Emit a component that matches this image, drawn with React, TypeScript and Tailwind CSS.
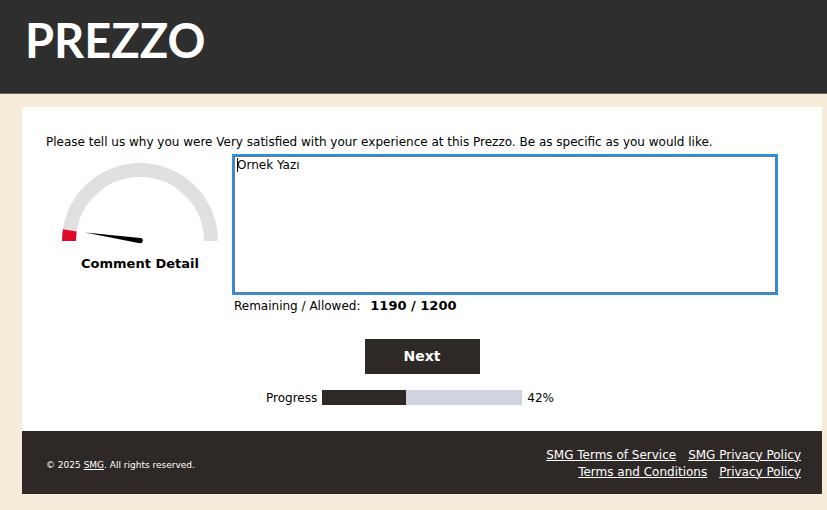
import React, { useState } from "react";

const LIMIT = 1200;
const PROGRESS = 42;

function Logo() {
  return (
    <svg viewBox="0 0 200 64" className="block h-[64px] w-[200px] overflow-visible" role="img" aria-label="Prezzo">
      <text x="1" y="54" fill="#fff" className="font-['Lato'] text-[47px] font-bold">
        PREZZO
      </text>
    </svg>
  );
}

function Gauge() {
  return (
    <svg viewBox="0 0 156 82" className="block h-[82px] w-[156px]" aria-hidden="true">
      <path d="M7 78a71 71 0 0 1 142 0" fill="none" stroke="#e0e0e0" strokeWidth="14" />
      <path d="M7 78a71 71 0 0 1 0.8-10.6" fill="none" stroke="#dd0a29" strokeWidth="14" />
      <path d="M23 69.4 78.6 75a2.6 2.6 0 1 1-.9 5.2Z" fill="#000" />
    </svg>
  );
}

export default function App() {
  const [comment, setComment] = useState("Ornek Yazı");
  return (
    <div className="min-h-screen bg-[#f7ebd9] font-['DejaVu_Sans',Verdana,sans-serif] text-[12px] leading-4 text-black">
      <header className="h-[94px] border-b border-[#6f675c] bg-[#2e2e2e] pt-1 pl-6">
        <Logo />
      </header>
      <div className="pt-[13px] pr-[5px] pb-4 pl-[22px]">
        <main className="bg-white px-6 pt-[27px] pb-[25px]">
          <label htmlFor="comment" className="block">
            Please tell us why you were Very satisfied with your experience at this Prezzo. Be as specific as you would like.
          </label>
          <div className="mt-[6px] flex pr-[22px]">
            <div className="flex w-[188px] shrink-0 flex-col items-center pt-[7px]">
              <Gauge />
              <strong className="mt-[11px] text-[13px]">Comment Detail</strong>
            </div>
            <div className="min-w-0 grow">
              <div className="relative">
                <textarea
                  id="comment"
                  value={comment}
                  maxLength={LIMIT}
                  onChange={(e) => setComment(e.target.value)}
                  className="block h-[137px] w-full resize-none border border-[#767676] bg-white px-[2px] py-0 outline-2 outline-[#2492e6]"
                />
                <span className="absolute top-[2px] left-[3px] h-[14px] w-px bg-black" />
              </div>
              <p className="mt-[5px]">
                Remaining / Allowed: <strong className="ml-[6px] text-[13px]">{LIMIT - comment.length} / {LIMIT}</strong>
              </p>
            </div>
          </div>
          <div className="mt-[25px] flex justify-center">
            <button type="button" className="h-[35px] w-[115px] bg-[#2e2926] pb-[2px] text-[14px] font-bold text-white">
              Next
            </button>
          </div>
          <div className="mt-4 flex items-start justify-center gap-[5px] pr-6">
            <span>Progress</span>
            <div className="h-[15px] w-[200px] bg-[#cfd4df]" role="progressbar" aria-valuenow={PROGRESS} aria-label="Progress">
              <div className="h-full bg-[#2e2926]" style={{ width: `${PROGRESS}%` }} />
            </div>
            <span>{PROGRESS}%</span>
          </div>
        </main>
        <footer className="flex h-[63px] items-center justify-between bg-[#2e2926] pt-[2px] pr-[21px] pl-6 text-white">
          <small className="pt-[2px] text-[9px]">
            © 2025 <a href="#smg" className="underline">SMG</a>. All rights reserved.
          </small>
          <nav className="text-right leading-[17px]">
            <div className="flex justify-end gap-3">
              <a href="#smg-terms" className="underline">SMG Terms of Service</a>
              <a href="#smg-privacy" className="underline">SMG Privacy Policy</a>
            </div>
            <div className="flex justify-end gap-3">
              <a href="#terms" className="underline">Terms and Conditions</a>
              <a href="#privacy" className="underline">Privacy Policy</a>
            </div>
          </nav>
        </footer>
      </div>
    </div>
  );
}
